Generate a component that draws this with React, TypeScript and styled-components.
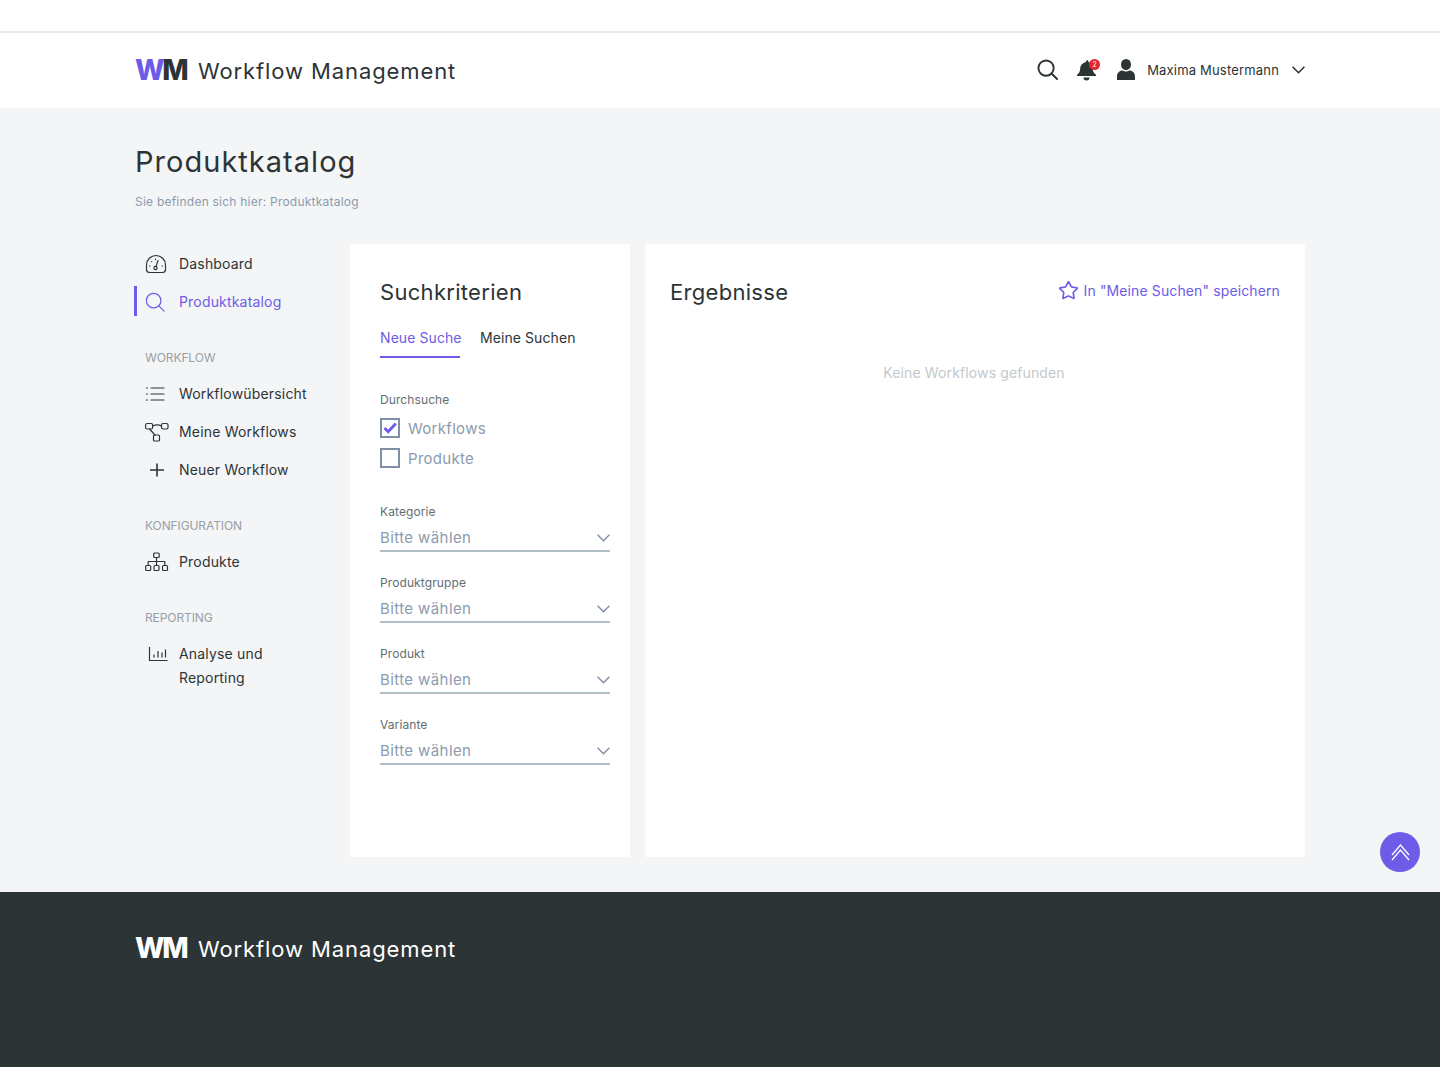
import { ReactElement, ReactNode } from 'react';
import styled, { createGlobalStyle } from 'styled-components';
import { Star } from 'lucide-react';

const GlobalStyle = createGlobalStyle`
  html, body {
    margin: 0;
    padding: 0;
    background: #f4f5f7;
    font-family: Inter, 'Open Sans', sans-serif;
    color: #2d3436;
  }
  * { box-sizing: border-box; }
`;

const Page = styled.div`
  position: relative;
  width: 100%;
  height: 1067px;
  display: flex;
  flex-direction: column;
  overflow: hidden;
`;

const TopStrip = styled.div`
  height: 33px;
  background: #fff;
  border-bottom: 2px solid #e8e9eb;
`;

const Header = styled.header`
  height: 75px;
  background: #fff;
  padding: 0 135px;
  display: flex;
  align-items: center;
  justify-content: space-between;
`;

const Brand = styled.div`
  display: flex;
  align-items: center;
  gap: 11px;
`;

const LogoMark = styled.div<{ $light?: boolean }>`
  width: 52px;
  margin-top: -1px;
  display: flex;
  font-family: Inter, sans-serif;
  font-size: 28px;
  line-height: 28px;
  font-weight: 800;
  letter-spacing: -2.5px;
  color: ${({ $light }) => ($light ? '#fff' : '#2d3436')};
`;

const LogoW = styled.span<{ $light?: boolean }>`
  color: ${({ $light }) => ($light ? '#fff' : '#6c5ce7')};
`;

const BrandName = styled.div<{ $light?: boolean }>`
  font-size: 22px;
  font-weight: 400;
  letter-spacing: 0.9px;
  color: ${({ $light }) => ($light ? '#fff' : '#2d3436')};
`;

const UserBar = styled.div`
  display: flex;
  align-items: center;
  margin-top: -2px;
`;

const BellWrap = styled.div`
  position: relative;
  width: 20px;
  height: 22px;
  margin-left: 19px;
`;

const Badge = styled.span`
  position: absolute;
  top: 0;
  right: -3px;
  width: 11px;
  height: 11px;
  border-radius: 50%;
  background: #e0272f;
  color: #fff;
  font-size: 7px;
  line-height: 11px;
  text-align: center;
`;

const UserName = styled.span`
  font-size: 13px;
  letter-spacing: 0.18px;
  margin-left: 12px;
  margin-right: 13px;
  white-space: nowrap;
  color: #2d3436;
`;

const UserIcon = styled.svg`
  margin-left: 20px;
`;

const Main = styled.main`
  flex: 1;
  padding: 0 135px;
`;

const Title = styled.h1`
  margin: 0;
  padding-top: 36px;
  font-size: 29px;
  line-height: 36px;
  font-weight: 400;
  letter-spacing: 1.03px;
  color: #2d3436;
`;

const Breadcrumb = styled.div`
  margin-top: 14px;
  font-size: 12px;
  line-height: 16px;
  letter-spacing: 0.23px;
  color: #8c9bae;
`;

const Columns = styled.div`
  display: flex;
  margin-top: 34px;
  height: 613px;
`;

const Sidebar = styled.nav`
  width: 215px;
  flex-shrink: 0;
`;

const NavItem = styled.div<{ $active?: boolean }>`
  position: relative;
  display: flex;
  align-items: flex-start;
  min-height: 38px;
  padding-left: 10px;
  padding-top: 8px;
  font-size: 14px;
  line-height: 24px;
  letter-spacing: 0.18px;
  color: ${({ $active }) => ($active ? '#6c5ce7' : '#2d3436')};
  ${({ $active }) =>
    $active &&
    `&::before {
      content: '';
      position: absolute;
      left: -1px;
      top: 4px;
      width: 3px;
      height: 30px;
      background: #6c5ce7;
    }`}
`;

const NavIcon = styled.span`
  width: 34px;
  height: 24px;
  flex-shrink: 0;
  display: flex;
  align-items: center;
`;

const NavHeading = styled.div`
  padding-left: 10px;
  font-size: 12px;
  line-height: 16px;
  letter-spacing: -0.1px;
  color: #999ea3;
  margin-top: 30px;
  margin-bottom: 8px;
`;

const Panel = styled.section<{ $wide?: boolean }>`
  background: #fff;
  height: 100%;
  width: ${({ $wide }) => ($wide ? '660px' : '280px')};
  margin-left: ${({ $wide }) => ($wide ? '15px' : '0')};
  padding: ${({ $wide }) => ($wide ? '32px 25px 0' : '32px 20px 0 30px')};
`;

const PanelTitle = styled.h2`
  margin: 0;
  font-size: 22px;
  line-height: 32px;
  font-weight: 400;
  letter-spacing: 0.3px;
  color: #2d3436;
`;

const Tabs = styled.div`
  display: flex;
  gap: 20px;
  margin-top: 18px;
`;

const Tab = styled.div<{ $active?: boolean }>`
  height: 32px;
  width: ${({ $active }) => ($active ? '80px' : 'auto')};
  font-size: 14px;
  line-height: 24px;
  letter-spacing: 0.08px;
  white-space: nowrap;
  color: ${({ $active }) => ($active ? '#6c5ce7' : '#2d3436')};
  border-bottom: 2px solid ${({ $active }) => ($active ? '#6c5ce7' : 'transparent')};
`;

const FieldLabel = styled.div`
  font-size: 12px;
  line-height: 16px;
  letter-spacing: 0.1px;
  color: #636e72;
`;

const CheckGroup = styled.div`
  margin-top: 34px;
  margin-bottom: 31px;

  ${FieldLabel} {
    margin-bottom: 5px;
  }
`;

const CheckRow = styled.div`
  display: flex;
  align-items: center;
  gap: 8px;
  height: 30px;
  font-size: 15px;
  letter-spacing: 0.3px;
  color: #8c9bae;
`;

const CheckBox = styled.span`
  width: 20px;
  height: 20px;
  border: 2px solid #7f8fa4;
  display: flex;
  align-items: center;
  justify-content: center;
`;

const Field = styled.div`
  width: 230px;
  height: 71px;
`;

const SelectRow = styled.div`
  height: 32px;
  padding-top: 5px;
  display: flex;
  align-items: center;
  justify-content: space-between;
  border-bottom: 2px solid #b2bec3;
  font-size: 15px;
  letter-spacing: 0.4px;
  color: #8c9bae;
`;

const ResultHead = styled.div`
  display: flex;
  align-items: center;
  justify-content: space-between;
`;

const SaveLink = styled.div`
  display: flex;
  align-items: center;
  gap: 5px;
  font-size: 14px;
  letter-spacing: 0.12px;
  margin-top: -3px;
  color: #6c5ce7;
`;

const EmptyNote = styled.div`
  margin-top: 56px;
  padding-right: 2px;
  text-align: center;
  font-size: 14px;
  line-height: 18px;
  letter-spacing: 0.13px;
  color: #c4c8cb;
`;

const Footer = styled.footer`
  height: 175px;
  background: #2d3436;
  padding: 43px 135px 0;
`;

const ScrollTop = styled.button`
  position: absolute;
  left: 1380px;
  top: 832px;
  width: 40px;
  height: 40px;
  border: 0;
  padding: 0;
  border-radius: 50%;
  background: #6c5ce7;
  display: flex;
  align-items: center;
  justify-content: center;
`;

const iconProps = {
  fill: 'none',
  stroke: '#2d3436',
  strokeWidth: 1.2,
  strokeLinecap: 'round' as const,
  strokeLinejoin: 'round' as const,
};

const GaugeIcon = () => (
  <svg width="22" height="20" viewBox="0 0 22 20" {...iconProps}>
    <path d="M4.500 18.500h13a3 3 0 0 0 3-3V11A9.500 9.500 0 0 0 1.500 11v4.500a3 3 0 0 0 3 3z" />
    <circle cx="10.500" cy="14" r="1.600" />
    <path d="M11 12.400 13 6.500M4.500 12h.6M6.500 7.500h.3M10.500 5v.4M17 12h.6" />
  </svg>
);

const SearchIcon = ({ size, color, width }: { size: number; color: string; width: number }) => (
  <svg width={size} height={size} viewBox="0 0 22 22" fill="none" stroke={color} strokeWidth={width} strokeLinecap="round">
    <circle cx="9.500" cy="9.500" r="8" />
    <path d="m15.500 15.500 5.500 5.500" />
  </svg>
);

const ListIcon = () => (
  <svg width="20" height="16" viewBox="0 0 20 16" {...iconProps}>
    <path d="M6 2h13M6 8h13M6 14h13M1.500 2h1M1.500 8h1M1.500 14h1" />
  </svg>
);

const FlowIcon = () => (
  <svg width="24" height="20" viewBox="0 0 24 20" {...iconProps}>
    <rect x="0.600" y="1.500" width="7" height="5.500" rx="1.500" />
    <rect x="16.500" y="1.500" width="6.500" height="5.500" rx="1.500" />
    <rect x="8.500" y="13" width="6" height="6" rx="1" />
    <path d="M7.600 4c3-1.500 6-1.500 8.900 0M4.500 7l5.500 6" />
  </svg>
);

const PlusIcon = () => (
  <svg width="24" height="20" viewBox="0 0 24 20" fill="none" stroke="#2d3436" strokeWidth="1.600">
    <path d="M5 10h14M12 3.500v13" />
  </svg>
);

const TreeIcon = () => (
  <svg width="24" height="20" viewBox="0 0 24 20" {...iconProps}>
    <rect x="8.700" y="1" width="5.500" height="4.500" rx="1" />
    <rect x="0.700" y="13.500" width="5" height="5" rx="1" />
    <rect x="9" y="13.500" width="5" height="5" rx="1" />
    <rect x="17.500" y="13.500" width="5" height="5" rx="1" />
    <path d="M11.500 5.500v8M3.200 13.500V9.500h16.600v4" />
  </svg>
);

const ChartIcon = () => (
  <svg width="24" height="18" viewBox="0 0 24 18" {...iconProps} strokeLinecap="butt">
    <path d="M4.500 2v13.500h18" />
    <path d="M9 9.500V12.500M13 6v6.500M17 7.500v5M20.500 4.500v8" />
  </svg>
);

const BellIcon = () => (
  <svg width="20" height="22" viewBox="0 0 20 22" fill="#2d3436">
    <path d="M9 2.500c.6-2 2.600-1.400 2.400.4 3 1 4 3.600 4.200 6.400.2 3 1 4.800 3.400 6.500v1.100H0v-1.100c2.400-1.700 3-3.500 3.200-6.500.2-3 2-5.500 5.800-6.400z" />
    <path d="M6.500 18.500h6a3 3 0 0 1-6 0z" />
  </svg>
);

const PersonIcon = () => (
  <UserIcon width="18" height="21" viewBox="0 0 18 21" fill="#2d3436">
    <ellipse cx="9" cy="5.500" rx="5" ry="5.500" />
    <path d="M0 21v-3.500C0 14 2.500 11.500 5.500 11.500c1 .6 2.200 1 3.500 1s2.500-.4 3.500-1c3 0 5.500 2.500 5.500 6V21z" />
  </UserIcon>
);

const CheckMark = () => (
  <svg width="14" height="12" viewBox="0 0 14 12" fill="none" stroke="#6c5ce7" strokeWidth="2.800">
    <path d="m1.500 6 3.700 3.800L12.800 1.500" />
  </svg>
);

const Chevron = ({ color, width }: { color: string; width: number }) => (
  <svg width="13" height="8" viewBox="0 0 13 8" fill="none" stroke={color} strokeWidth={width}>
    <path d="m.6.8 5.900 5.900L12.400.8" />
  </svg>
);

const Logo = ({ light }: { light?: boolean }) => (
  <Brand>
    <LogoMark $light={light}>
      <LogoW $light={light}>W</LogoW>M
    </LogoMark>
    <BrandName $light={light}>Workflow Management</BrandName>
  </Brand>
);

const NAV_TOP: { label: ReactNode; icon: ReactElement; active?: boolean }[] = [
  { label: 'Dashboard', icon: <GaugeIcon /> },
  { label: 'Produktkatalog', icon: <SearchIcon size={20} color="#6c5ce7" width={1.3} />, active: true },
];

const NAV_WORKFLOW = [
  { label: 'Workflowübersicht', icon: <ListIcon /> },
  { label: 'Meine Workflows', icon: <FlowIcon /> },
  { label: 'Neuer Workflow', icon: <PlusIcon /> },
];

const SELECTS = ['Kategorie', 'Produktgruppe', 'Produkt', 'Variante'];

const App = (): ReactElement => {
  return (
    <Page>
      <GlobalStyle />
      <TopStrip />
      <Header>
        <Logo />
        <UserBar>
          <SearchIcon size={21} color="#2d3436" width={2} />
          <BellWrap>
            <BellIcon />
            <Badge>2</Badge>
          </BellWrap>
          <PersonIcon />
          <UserName>Maxima Mustermann</UserName>
          <Chevron color="#2d3436" width={1.6} />
        </UserBar>
      </Header>
      <Main>
        <Title>Produktkatalog</Title>
        <Breadcrumb>Sie befinden sich hier: Produktkatalog</Breadcrumb>
        <Columns>
          <Sidebar>
            {NAV_TOP.map((item) => (
              <NavItem key={String(item.label)} $active={item.active}>
                <NavIcon>{item.icon}</NavIcon>
                {item.label}
              </NavItem>
            ))}
            <NavHeading>WORKFLOW</NavHeading>
            {NAV_WORKFLOW.map((item) => (
              <NavItem key={item.label}>
                <NavIcon>{item.icon}</NavIcon>
                {item.label}
              </NavItem>
            ))}
            <NavHeading>KONFIGURATION</NavHeading>
            <NavItem>
              <NavIcon>
                <TreeIcon />
              </NavIcon>
              Produkte
            </NavItem>
            <NavHeading>REPORTING</NavHeading>
            <NavItem>
              <NavIcon>
                <ChartIcon />
              </NavIcon>
              <span>
                Analyse und
                <br />
                Reporting
              </span>
            </NavItem>
          </Sidebar>
          <Panel>
            <PanelTitle>Suchkriterien</PanelTitle>
            <Tabs>
              <Tab $active>Neue Suche</Tab>
              <Tab>Meine Suchen</Tab>
            </Tabs>
            <CheckGroup>
              <FieldLabel>Durchsuche</FieldLabel>
              <CheckRow>
                <CheckBox>
                  <CheckMark />
                </CheckBox>
                Workflows
              </CheckRow>
              <CheckRow>
                <CheckBox />
                Produkte
              </CheckRow>
            </CheckGroup>
            {SELECTS.map((label) => (
              <Field key={label}>
                <FieldLabel>{label}</FieldLabel>
                <SelectRow>
                  Bitte wählen
                  <Chevron color="#7f8fa4" width={1.4} />
                </SelectRow>
              </Field>
            ))}
          </Panel>
          <Panel $wide>
            <ResultHead>
              <PanelTitle>Ergebnisse</PanelTitle>
              <SaveLink>
                <Star size={21} color="#6c5ce7" strokeWidth={1.9} />
                In "Meine Suchen" speichern
              </SaveLink>
            </ResultHead>
            <EmptyNote>Keine Workflows gefunden</EmptyNote>
          </Panel>
        </Columns>
      </Main>
      <Footer>
        <Logo light />
      </Footer>
      <ScrollTop aria-label="Nach oben">
        <svg width="19" height="17" viewBox="0 0 19 17" fill="none" stroke="#fff" strokeWidth="1.300">
          <path d="M1 11 9.500 1 18 11M1 16 9.500 6 18 16" />
        </svg>
      </ScrollTop>
    </Page>
  );
};

export default App;
